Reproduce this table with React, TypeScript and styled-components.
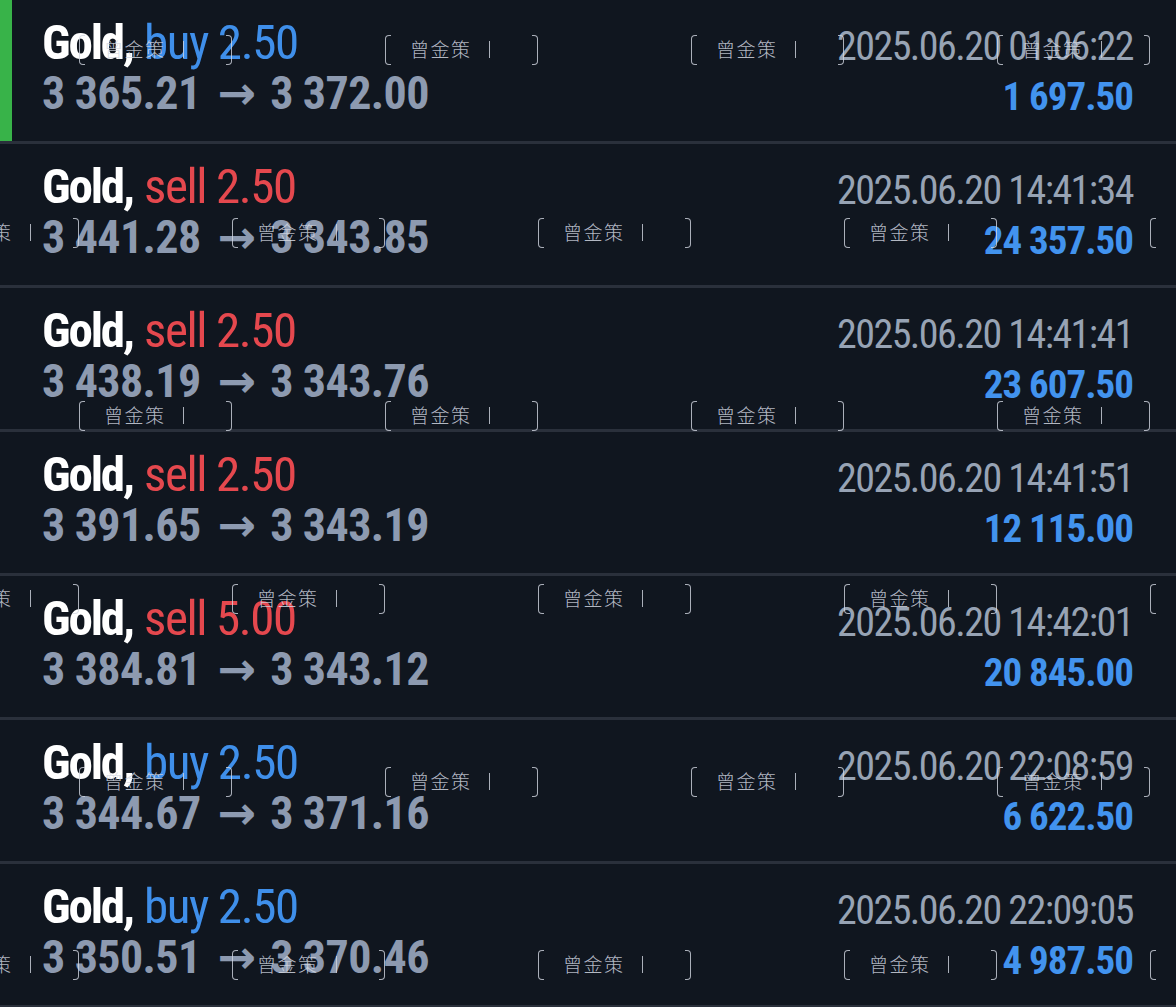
import React from "react";
import styled, { createGlobalStyle } from "styled-components";

const Global = createGlobalStyle`
  html, body { margin: 0; padding: 0; background: #10161f; }
  body { font-family: Roboto, "Liberation Sans", sans-serif; overflow: hidden; }
`;

type Trade = {
  side: "buy" | "sell";
  volume: string;
  open: string;
  close: string;
  time: string;
  profit: string;
  active?: boolean;
};

const trades: Trade[] = [
  { side: "buy", volume: "2.50", open: "3 365.21", close: "3 372.00", time: "2025.06.20 01:06:22", profit: "1 697.50", active: true },
  { side: "sell", volume: "2.50", open: "3 441.28", close: "3 343.85", time: "2025.06.20 14:41:34", profit: "24 357.50" },
  { side: "sell", volume: "2.50", open: "3 438.19", close: "3 343.76", time: "2025.06.20 14:41:41", profit: "23 607.50" },
  { side: "sell", volume: "2.50", open: "3 391.65", close: "3 343.19", time: "2025.06.20 14:41:51", profit: "12 115.00" },
  { side: "sell", volume: "5.00", open: "3 384.81", close: "3 343.12", time: "2025.06.20 14:42:01", profit: "20 845.00" },
  { side: "buy", volume: "2.50", open: "3 344.67", close: "3 371.16", time: "2025.06.20 22:08:59", profit: "6 622.50" },
  { side: "buy", volume: "2.50", open: "3 350.51", close: "3 370.46", time: "2025.06.20 22:09:05", profit: "4 987.50" },
];

const Page = styled.div`
  position: relative;
  width: 1176px;
  height: 1007px;
  overflow: hidden;
  background: #10161f;
`;

const List = styled.div`
  display: flex;
  flex-direction: column;
`;

const Row = styled.div<{ $active?: boolean }>`
  display: flex;
  justify-content: space-between;
  height: 141px;
  box-sizing: content-box;
  border-bottom: 3px solid #2a303b;
  padding: 0 43px 0 42px;
  box-shadow: ${(p) => (p.$active ? "inset 12px 0 0 #38b349" : "none")};
`;

const Left = styled.div`
  display: flex;
  flex-direction: column;
  padding-top: 17px;
`;

const Right = styled.div`
  display: flex;
  flex-direction: column;
  align-items: flex-end;
  padding-top: 21px;
`;

const Title = styled.div`
  font-size: 49px;
  line-height: 51px;
  font-stretch: 75%;
  white-space: nowrap;
`;

const Symbol = styled.span`
  color: #ffffff;
  font-weight: 700;
  letter-spacing: -2.2px;
`;

const Side = styled.span<{ $side: "buy" | "sell" }>`
  color: ${(p) => (p.$side === "buy" ? "#3f8fea" : "#e5484e")};
  font-weight: 400;
  letter-spacing: -1.4px;
`;

const Prices = styled.div`
  display: flex;
  align-items: baseline;
  font-size: 46px;
  line-height: 50px;
  font-weight: 700;
  font-stretch: 75%;
  letter-spacing: -0.6px;
  color: #8d9ab0;
  white-space: nowrap;
`;

const Arrow = styled.span`
  font-family: "DejaVu Sans", sans-serif;
  font-weight: 700;
  font-stretch: normal;
  font-size: 46px;
  letter-spacing: 0;
  margin: 0 14px 0 17px;
`;

const Time = styled.div`
  font-size: 40px;
  line-height: 51px;
  font-stretch: 75%;
  letter-spacing: -1.55px;
  color: #97a3b4;
  white-space: nowrap;
`;

const Profit = styled.div`
  font-size: 39px;
  line-height: 51px;
  font-weight: 700;
  font-stretch: 75%;
  letter-spacing: -1px;
  color: #4293ee;
  white-space: nowrap;
`;

const WatermarkLayer = styled.div`
  position: absolute;
  inset: 0;
  pointer-events: none;
`;

const Mark = styled.div`
  position: absolute;
  width: 153px;
  height: 30px;
  display: flex;
  align-items: center;
  color: rgba(210, 215, 225, 0.85);
`;

const Bracket = styled.span<{ $side: "left" | "right" }>`
  align-self: stretch;
  width: 5px;
  border: 1.5px solid rgba(210, 215, 225, 0.8);
  ${(p) => (p.$side === "left" ? "border-right: none; border-radius: 4px 0 0 4px;" : "border-left: none; border-radius: 0 4px 4px 0;")}
`;

const MarkText = styled.span`
  margin-left: 19px;
  font-family: "Noto Sans CJK SC", sans-serif;
  font-weight: 300;
  font-size: 19px;
  letter-spacing: 1.5px;
  line-height: 22px;
  margin-top: -2px;
`;

const MarkBar = styled.span`
  width: 1.5px;
  height: 17px;
  margin-left: 17px;
  margin-top: -2px;
  background: rgba(210, 215, 225, 0.8);
`;

const Spacer = styled.span`
  flex: 1;
`;

function Watermark({ x, y }: { x: number; y: number }) {
  return (
    <Mark style={{ left: x, top: y }}>
      <Bracket $side="left" />
      <MarkText>曾金策</MarkText>
      <MarkBar />
      <Spacer />
      <Bracket $side="right" />
    </Mark>
  );
}

const marks: { x: number; y: number }[] = [];
[35, 218, 401, 584, 767, 950].forEach((y, i) => {
  const xs = i % 2 === 0 ? [79, 385, 691, 997] : [-74, 232, 538, 844, 1150];
  xs.forEach((x) => marks.push({ x, y }));
});

export default function App() {
  return (
    <Page>
      <Global />
      <List>
        {trades.map((t, i) => (
          <Row key={i} $active={t.active}>
            <Left>
              <Title>
                <Symbol>Gold,</Symbol> <Side $side={t.side}>{t.side} {t.volume}</Side>
              </Title>
              <Prices>
                <span>{t.open}</span>
                <Arrow>→</Arrow>
                <span>{t.close}</span>
              </Prices>
            </Left>
            <Right>
              <Time>{t.time}</Time>
              <Profit>{t.profit}</Profit>
            </Right>
          </Row>
        ))}
      </List>
      <WatermarkLayer>
        {marks.map((m, i) => (
          <Watermark key={i} x={m.x} y={m.y} />
        ))}
      </WatermarkLayer>
    </Page>
  );
}
